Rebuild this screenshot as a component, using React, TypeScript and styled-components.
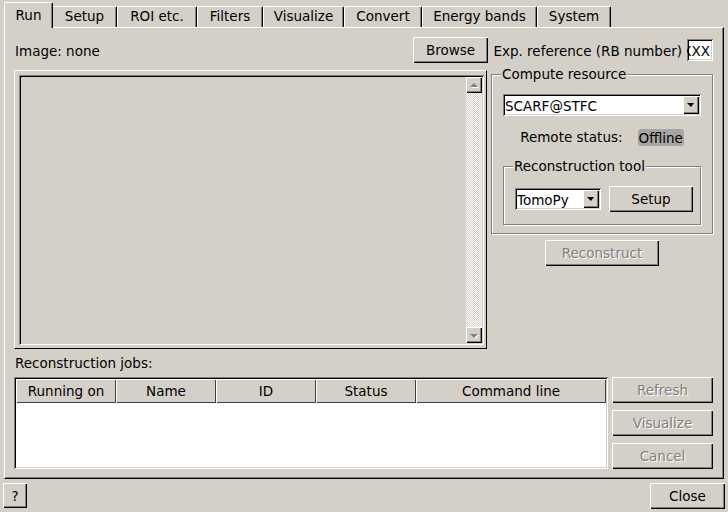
import React from 'react';
import styled, { createGlobalStyle, css } from 'styled-components';

const BG = '#d4d0c8';

const GlobalStyle = createGlobalStyle`
  html, body { margin: 0; padding: 0; background: ${BG}; }
  * { box-sizing: border-box; }
`;

const raised = css`
  box-shadow: inset 1px 1px 0 #ffffff, inset -1px -1px 0 #000000, inset -2px -2px 0 #808080;
`;

const sunken = css`
  box-shadow: inset 1px 1px 0 #808080, inset -1px -1px 0 #ffffff, inset 2px 2px 0 #000000,
    inset -2px -2px 0 ${BG};
`;

const Window = styled.div`
  width: 728px;
  height: 512px;
  background: ${BG};
  font-family: 'DejaVu Sans', 'Liberation Sans', sans-serif;
  font-size: 13.5px;
  line-height: 16px;
  color: #000;
  display: flex;
  flex-direction: column;
  overflow: hidden;
`;

const TabBar = styled.div`
  display: flex;
  align-items: flex-end;
  height: 27px;
  padding-left: 4px;
  position: relative;
  z-index: 1;
`;

const Tab = styled.div<{ $w: number; $active?: boolean }>`
  width: ${(p) => p.$w}px;
  flex-shrink: 0;
  height: 21px;
  padding: 0 0 2px;
  display: flex;
  align-items: center;
  justify-content: center;
  white-space: nowrap;
  background: ${BG};
  border-top: 1px solid #ffffff;
  border-left: 1px solid #ffffff;
  border-right: 1px solid #000000;
  box-shadow: inset -1px 0 0 #808080;
  border-radius: 2px 2px 0 0;
  ${(p) =>
    p.$active &&
    css`
      height: 26px;
      margin: 0 -1px -1px 0;
      padding: 0 0 1px;
      position: relative;
      z-index: 2;
    `}
`;

const Pane = styled.div`
  flex: 1;
  margin: 0 4px;
  border-top: 1px solid #ffffff;
  border-left: 1px solid #ffffff;
  border-right: 1px solid #000000;
  border-bottom: 1px solid #000000;
  box-shadow: inset -1px -1px 0 #808080;
  padding: 9px 10px 9px 9px;
  display: flex;
  flex-direction: column;
`;

const TopSection = styled.div`
  display: flex;
  gap: 3px;
  height: 312px;
`;

const LeftCol = styled.div`
  width: 474px;
  display: flex;
  flex-direction: column;
`;

const RightCol = styled.div`
  width: 222px;
  display: flex;
  flex-direction: column;
`;

const HeaderRow = styled.div<{ $end?: boolean }>`
  height: 26px;
  display: flex;
  align-items: center;
  justify-content: ${(p) => (p.$end ? 'flex-end' : 'space-between')};
  gap: 5px;
`;

const Label = styled.span`
  white-space: nowrap;
  padding: 1px 0 0 1px;
`;

const Button = styled.button<{ $w: number; $h?: number }>`
  width: ${(p) => p.$w}px;
  height: ${(p) => p.$h ?? 26}px;
  flex-shrink: 0;
  margin: 0;
  padding: 0;
  border: none;
  background: ${BG};
  font: inherit;
  color: #000;
  ${raised};
  display: flex;
  align-items: center;
  justify-content: center;
  &:disabled {
    color: #808080;
    text-shadow: 1px 1px 0 #ffffff;
  }
`;

const TextField = styled.div`
  width: 26px;
  height: 22px;
  background: #ffffff;
  ${sunken};
  display: flex;
  align-items: center;
  justify-content: flex-end;
  overflow: hidden;
  padding: 1px 3px 0 2px;
  white-space: nowrap;
`;

const ImageFrame = styled.div`
  flex: 1;
  width: 473px;
  margin-top: 7px;
  border-top: 1px solid #ffffff;
  border-left: 1px solid #ffffff;
  border-right: 1px solid #000000;
  border-bottom: 1px solid #000000;
  padding: 4px 2px 3px 4px;
  display: flex;
`;

const ScrollArea = styled.div`
  flex: 1;
  background: ${BG};
  ${sunken};
  padding: 2px;
  display: flex;
  justify-content: flex-end;
`;

const ScrollBar = styled.div`
  width: 16px;
  display: flex;
  flex-direction: column;
`;

const ScrollButton = styled.div<{ $down?: boolean }>`
  width: 16px;
  height: 16px;
  background: ${BG};
  ${raised};
  display: flex;
  align-items: center;
  justify-content: center;
  &::after {
    content: '';
    width: 0;
    height: 0;
    border-left: 4px solid transparent;
    border-right: 4px solid transparent;
    ${(p) =>
      p.$down
        ? css`border-top: 4px solid #808080; margin-top: 1px;`
        : css`border-bottom: 4px solid #808080; margin-top: -1px;`}
    filter: drop-shadow(1px 1px 0 #ffffff);
  }
`;

const ScrollTrack = styled.div`
  flex: 1;
  background-image: conic-gradient(#ffffff 25%, ${BG} 0 50%, #ffffff 0 75%, ${BG} 0);
  background-size: 2px 2px;
`;

const Group = styled.div<{ $mt: number; $pb: number }>`
  margin-top: ${(p) => p.$mt}px;
  border: 1px solid #808080;
  box-shadow: inset 1px 1px 0 #ffffff, 1px 1px 0 #ffffff;
  display: flex;
  flex-direction: column;
  padding: 0 11px ${(p) => p.$pb}px;
`;

const GroupTitle = styled.span`
  align-self: flex-start;
  margin: -8px 0 0 -2px;
  padding: 0 1px;
  line-height: 15px;
  background: ${BG};
  white-space: nowrap;
`;

const Combo = styled.div<{ $w?: number; $mt?: number }>`
  height: 22px;
  ${(p) => (p.$w ? `width: ${p.$w}px;` : '')}
  flex-shrink: 0;
  margin-top: ${(p) => p.$mt ?? 0}px;
  background: #ffffff;
  ${sunken};
  padding: 2px;
  display: flex;
  align-items: stretch;
`;

const ComboText = styled.span`
  flex: 1;
  padding: 1px 0 0;
  display: flex;
  align-items: center;
  white-space: nowrap;
  overflow: hidden;
`;

const ComboArrow = styled.span`
  width: 16px;
  background: ${BG};
  ${raised};
  display: flex;
  align-items: center;
  justify-content: center;
  &::after {
    content: '';
    width: 0;
    height: 0;
    border-left: 4px solid transparent;
    border-right: 3px solid transparent;
    border-top: 4px solid #000000;
    margin-left: -1px;
  }
`;

const StatusRow = styled.div`
  margin-top: 12px;
  height: 18px;
  display: flex;
  align-items: center;
  justify-content: center;
  gap: 15px;
`;

const Badge = styled.span`
  background: #a8a6a2;
  border-radius: 3px;
  padding: 1px 1px 0;
  line-height: 16px;
`;

const ToolRow = styled.div`
  margin-top: 12px;
  height: 26px;
  display: flex;
  align-items: center;
  gap: 8px;
`;

const CenterWrap = styled.div`
  margin-top: 6px;
  display: flex;
  justify-content: center;
`;

const JobsLabel = styled.div`
  margin-top: 6px;
  height: 16px;
  padding: 0 0 0 1px;
  display: flex;
  align-items: center;
`;

const BottomRow = styled.div`
  margin-top: 6px;
  height: 92px;
  display: flex;
  gap: 4px;
`;

const Table = styled.div`
  width: 595px;
  background: #ffffff;
  ${sunken};
  padding: 2px;
  display: flex;
  flex-direction: column;
`;

const TableHeader = styled.div`
  height: 24px;
  display: flex;
  background: ${BG};
`;

const HeaderCell = styled.div<{ $w?: number }>`
  ${(p) => (p.$w ? `width: ${p.$w}px; flex-shrink: 0;` : 'flex: 1;')}
  box-shadow: inset 1px 1px 0 #ffffff, inset -1px -1px 0 #404040;
  display: flex;
  align-items: center;
  justify-content: center;
  white-space: nowrap;
`;

const SideButtons = styled.div`
  width: 101px;
  display: flex;
  flex-direction: column;
  gap: 7px;
`;

const Footer = styled.div`
  height: 33px;
  padding: 0 3px 0 3px;
  display: flex;
  align-items: center;
  justify-content: space-between;
`;

const tabs: { name: string; w: number }[] = [
  { name: 'Run', w: 49 },
  { name: 'Setup', w: 65 },
  { name: 'ROI etc.', w: 80 },
  { name: 'Filters', w: 66 },
  { name: 'Visualize', w: 81 },
  { name: 'Convert', w: 78 },
  { name: 'Energy bands', w: 115 },
  { name: 'System', w: 74 },
];

const columns: { name: string; w?: number }[] = [
  { name: 'Running on', w: 100 },
  { name: 'Name', w: 100 },
  { name: 'ID', w: 100 },
  { name: 'Status', w: 100 },
  { name: 'Command line' },
];

export default function App() {
  return (
    <>
      <GlobalStyle />
      <Window>
        <TabBar>
          {tabs.map((t, i) => (
            <Tab key={t.name} $w={t.w} $active={i === 0}>
              {t.name}
            </Tab>
          ))}
        </TabBar>
        <Pane>
          <TopSection>
            <LeftCol>
              <HeaderRow>
                <Label>Image: none</Label>
                <Button $w={75}>Browse</Button>
              </HeaderRow>
              <ImageFrame>
                <ScrollArea>
                  <ScrollBar>
                    <ScrollButton />
                    <ScrollTrack />
                    <ScrollButton $down />
                  </ScrollBar>
                </ScrollArea>
              </ImageFrame>
            </LeftCol>
            <RightCol>
              <HeaderRow $end>
                <Label>Exp. reference (RB number)</Label>
                <TextField>XXX</TextField>
              </HeaderRow>
              <Group $mt={11} $pb={8}>
                <GroupTitle>Compute resource</GroupTitle>
                <Combo $mt={12}>
                  <ComboText>SCARF@STFC</ComboText>
                  <ComboArrow />
                </Combo>
                <StatusRow>
                  <span>Remote status:</span>
                  <Badge>Offline</Badge>
                </StatusRow>
                <Group $mt={20} $pb={12}>
                  <GroupTitle>Reconstruction tool</GroupTitle>
                  <ToolRow>
                    <Combo $w={86}>
                      <ComboText>TomoPy</ComboText>
                      <ComboArrow />
                    </Combo>
                    <Button $w={84}>Setup</Button>
                  </ToolRow>
                </Group>
              </Group>
              <CenterWrap>
                <Button $w={114} disabled>
                  Reconstruct
                </Button>
              </CenterWrap>
            </RightCol>
          </TopSection>
          <JobsLabel>Reconstruction jobs:</JobsLabel>
          <BottomRow>
            <Table>
              <TableHeader>
                {columns.map((c) => (
                  <HeaderCell key={c.name} $w={c.w}>
                    {c.name}
                  </HeaderCell>
                ))}
              </TableHeader>
            </Table>
            <SideButtons>
              <Button $w={101} disabled>
                Refresh
              </Button>
              <Button $w={101} disabled>
                Visualize
              </Button>
              <Button $w={101} disabled>
                Cancel
              </Button>
            </SideButtons>
          </BottomRow>
        </Pane>
        <Footer>
          <Button $w={24} $h={25}>
            ?
          </Button>
          <Button $w={75} $h={26}>
            Close
          </Button>
        </Footer>
      </Window>
    </>
  );
}
